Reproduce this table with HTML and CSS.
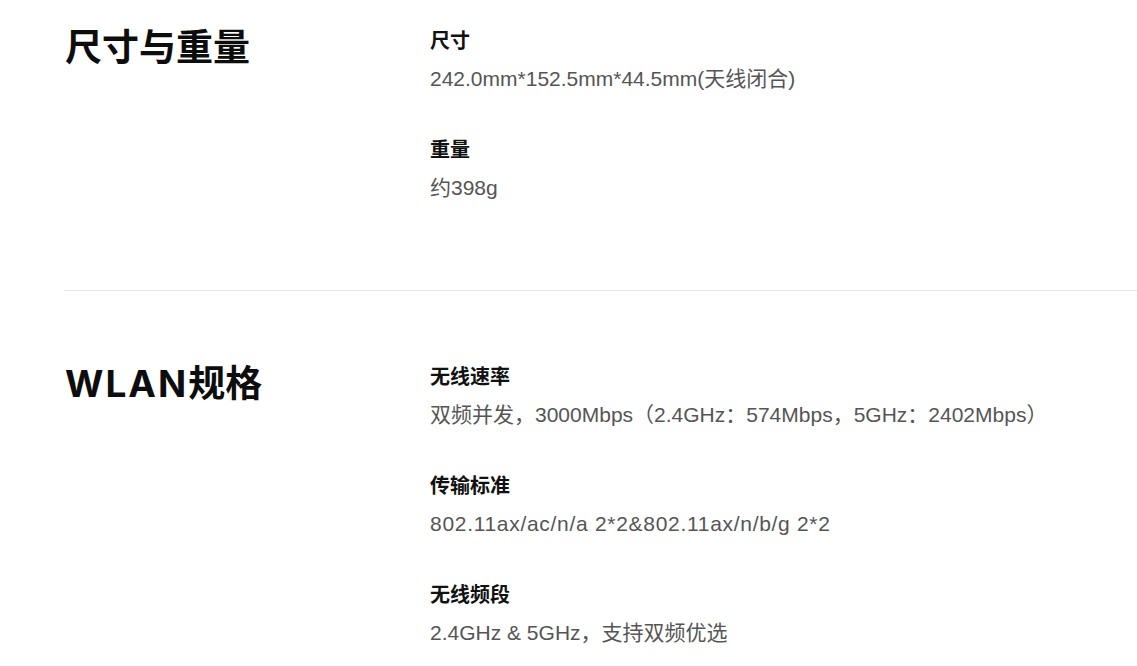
FILE: index.html
```html
<!DOCTYPE html>
<html lang="zh-CN">
<head>
<meta charset="utf-8">
<title>规格参数</title>
<link rel="stylesheet" href="styles.css">
</head>
<body>
<section class="spec first">
  <h2 class="spec-title">尺寸与重量</h2>
  <div class="spec-list">
    <div class="spec-item">
      <h3 class="spec-name">尺寸</h3>
      <p class="spec-value">242.0mm*152.5mm*44.5mm(天线闭合)</p>
    </div>
    <div class="spec-item">
      <h3 class="spec-name">重量</h3>
      <p class="spec-value">约398g</p>
    </div>
  </div>
</section>
<section class="spec">
  <h2 class="spec-title"><span class="latin">WLAN</span>规格</h2>
  <div class="spec-list">
    <div class="spec-item">
      <h3 class="spec-name">无线速率</h3>
      <p class="spec-value">双频并发，3000Mbps（2.4GHz：574Mbps，5GHz：2402Mbps）</p>
    </div>
    <div class="spec-item">
      <h3 class="spec-name">传输标准</h3>
      <p class="spec-value wide">802.11ax/ac/n/a 2*2&amp;802.11ax/n/b/g 2*2</p>
    </div>
    <div class="spec-item">
      <h3 class="spec-name">无线频段</h3>
      <p class="spec-value">2.4GHz &amp; 5GHz，支持双频优选</p>
    </div>
  </div>
</section>
</body>
</html>
```
FILE: styles.css
```css
* { box-sizing: border-box; }
html, body { margin: 0; padding: 0; background: #fff; }
body {
  font-family: "Liberation Sans", Arial, "Noto Sans CJK SC", sans-serif;
  color: #111;
  overflow: hidden;
}
.spec {
  display: flex;
  margin-left: 64px;
  padding: 72px 0 89px 1px;
  border-top: 1px solid #e6e6e6;
}
.spec.first {
  padding-top: 27px;
  border-top: none;
}
.spec-title {
  width: 365px;
  flex: none;
  margin: 0;
  font-size: 37px;
  line-height: 42px;
  font-weight: 700;
  color: #0d0d0d;
  font-family: "Inter", "Noto Sans CJK SC", sans-serif;
}
.spec-title .latin { letter-spacing: 2px; }
.spec-list {
  display: flex;
  flex-direction: column;
  gap: 44px;
}
.spec-item { display: flex; flex-direction: column; gap: 13px; }
.spec-name {
  margin: 0;
  font-size: 20px;
  line-height: 26px;
  font-weight: 700;
  color: #111;
  font-family: "Noto Sans CJK SC", sans-serif;
}
.spec-value {
  margin: 0;
  font-size: 21px;
  line-height: 26px;
  color: #555;
}
.spec-value.wide { letter-spacing: 0.7px; }
```
